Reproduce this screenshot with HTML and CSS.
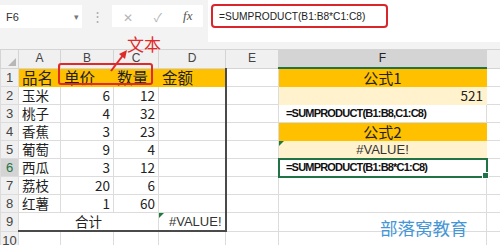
FILE: index.html
```html
<!DOCTYPE html>
<html lang="zh-CN">
<head>
    <meta charset="UTF-8">
    <meta name="viewport" content="width=device-width, initial-scale=1.0">
    <title>SUMPRODUCT</title>
    <link rel="stylesheet" href="styles.css">
</head>
<body>
    <div class="app">
        <div class="formula-bar">
            <div class="name-box">F6<span class="caret">▾</span></div>
            <div class="grip">⋮</div>
            <div class="fx-box">
                <span class="fx-btn">✕</span>
                <span class="fx-btn">✓</span>
                <span class="fx-btn fx">fx</span>
            </div>
            <div class="formula-input">
                <span class="formula-mark">=SUMPRODUCT(B1:B8*C1:C8)</span>
            </div>
        </div>

        <table class="sheet">
            <colgroup>
                <col style="width:18px"><col style="width:42px"><col style="width:53px"><col style="width:45px">
                <col style="width:67px"><col style="width:53px"><col style="width:208px"><col style="width:14px">
            </colgroup>
            <tr class="col-head">
                <th class="corner"><span class="corner-tri"></span></th>
                <th>A</th><th>B</th><th>C</th><th>D</th><th>E</th><th class="sel">F</th><th></th>
            </tr>
            <tr>
                <th class="row-num">1</th>
                <td class="title">品名</td><td class="title">单价</td><td class="title">数量</td><td class="title edge">金额</td>
                <td></td><td class="orange center big">公式1</td><td></td>
            </tr>
            <tr>
                <th class="row-num">2</th>
                <td>玉米</td><td class="num">6</td><td class="num">12</td><td class="edge"></td>
                <td></td><td class="pale num">521</td><td></td>
            </tr>
            <tr>
                <th class="row-num">3</th>
                <td>桃子</td><td class="num">4</td><td class="num">32</td><td class="edge"></td>
                <td></td><td class="code">=SUMPRODUCT(B1:B8,C1:C8)</td><td></td>
            </tr>
            <tr>
                <th class="row-num">4</th>
                <td>香蕉</td><td class="num">3</td><td class="num">23</td><td class="edge"></td>
                <td></td><td class="orange center big">公式2</td><td></td>
            </tr>
            <tr>
                <th class="row-num">5</th>
                <td>葡萄</td><td class="num">9</td><td class="num">4</td><td class="edge"></td>
                <td></td><td class="pale center err"><span class="flag"></span>#VALUE!</td><td></td>
            </tr>
            <tr>
                <th class="row-num sel">6</th>
                <td>西瓜</td><td class="num">3</td><td class="num">12</td><td class="edge"></td>
                <td></td><td class="code active">=SUMPRODUCT(B1:B8*C1:C8)<span class="handle"></span></td><td></td>
            </tr>
            <tr>
                <th class="row-num">7</th>
                <td>荔枝</td><td class="num">20</td><td class="num">6</td><td class="edge"></td>
                <td></td><td></td><td></td>
            </tr>
            <tr>
                <th class="row-num">8</th>
                <td>红薯</td><td class="num">1</td><td class="num">60</td><td class="edge"></td>
                <td></td><td></td><td></td>
            </tr>
            <tr>
                <th class="row-num">9</th>
                <td colspan="3" class="center bottom">合计</td><td class="num edge bottom err"><span class="flag"></span>#VALUE!</td>
                <td></td><td></td><td></td>
            </tr>
            <tr>
                <th class="row-num">10</th>
                <td></td><td></td><td></td><td></td><td></td><td></td><td></td>
            </tr>
        </table>

        <!-- 标注 -->
        <div class="mark-box"></div>
        <svg class="mark-arrow" width="30" height="30" viewBox="0 0 30 30">
            <path d="M3 24 L16 7" stroke="#e02a2a" stroke-width="2" fill="none"/>
            <path d="M19 3 L11 7 L17 12 Z" fill="#e02a2a"/>
        </svg>
        <div class="mark-text">文本</div>
        <div class="watermark">部落窝教育</div>
    </div>
</body>
</html>
```

FILE: styles.css
```css
body {
    margin: 0;
    background-color: #f3f3f3;
    font-family: "Noto Sans CJK SC", "Liberation Sans", sans-serif;
    color: #222;
}
.app {
    position: relative;
    width: 500px;
    height: 245px;
    overflow: hidden;
}
.formula-bar {
    display: flex;
    align-items: flex-start;
    height: 49px;
}
.name-box {
    display: flex;
    align-items: center;
    justify-content: space-between;
    box-sizing: border-box;
    width: 82px;
    height: 23px;
    margin-top: 5px;
    padding: 0 3px 0 6px;
    background-color: #fff;
    font-family: "Liberation Sans", sans-serif;
    font-size: 11px;
    color: #333;
}
.caret {
    font-size: 9px;
    color: #777;
}
.grip {
    width: 30px;
    margin-top: 6px;
    text-align: center;
    color: #aaa;
    font-size: 13px;
}
.fx-box {
    display: flex;
    align-items: center;
    justify-content: space-around;
    width: 91px;
    height: 22px;
    margin-top: 5px;
    background-color: #fff;
    color: #b5b5b5;
    font-size: 12px;
}
.fx-box .fx {
    font-family: "Liberation Serif", serif;
    font-style: italic;
    color: #555;
    font-size: 13px;
}
.formula-input {
    flex: 1;
    height: 42px;
    margin-left: 5px;
    background-color: #fff;
    padding: 4px 0 0 3px;
    box-sizing: border-box;
}
.formula-mark {
    display: block;
    box-sizing: border-box;
    width: 177px;
    height: 24px;
    padding: 5px 0 0 6px;
    border: 2px solid #d9262b;
    border-radius: 4px;
    font-family: "Liberation Sans", sans-serif;
    font-size: 10.2px;
    color: #222;
}
.sheet {
    table-layout: fixed;
    border-collapse: collapse;
    width: 500px;
    background-color: #fff;
}
.sheet th, .sheet td {
    height: 17px;
    padding: 0 3px;
    border: 1px solid #dcdcdc;
    white-space: nowrap;
    overflow: visible;
    font-size: 13.5px;
    line-height: 17px;
    font-weight: normal;
}
.col-head th {
    background-color: #f0f0f0;
    border-color: #d4d4d4;
    color: #444;
    font-family: "Liberation Sans", sans-serif;
    font-size: 12px;
    text-align: center;
}
.col-head th.sel {
    background-color: #d4d4d4;
    border-bottom: 2px solid #217346;
    color: #222;
}
.corner {
    position: relative;
}
.corner-tri {
    position: absolute;
    right: 2px;
    bottom: 2px;
    width: 0;
    height: 0;
    border-left: 8px solid transparent;
    border-bottom: 8px solid #b7b7b7;
}
.row-num {
    background-color: #f0f0f0;
    border-color: #d4d4d4;
    color: #444;
    font-family: "Liberation Sans", sans-serif;
    font-size: 13px !important;
    text-align: center;
    padding: 0 !important;
}
.row-num.sel {
    background-color: #d4d4d4;
    color: #217346;
}
.title {
    background-color: #ffc000;
    border-color: #ffc000 !important;
    font-size: 15.5px !important;
}
.num {
    text-align: right;
}
.center {
    text-align: center;
}
.big {
    font-size: 15px !important;
}
.orange {
    background-color: #ffc000;
    border-color: #ffc000 !important;
}
.pale {
    background-color: #fff2cc;
    border-color: #fff2cc !important;
}
.err {
    position: relative;
    font-family: "Liberation Sans", sans-serif;
    font-size: 13px !important;
    color: #333;
}
.flag {
    position: absolute;
    left: 0;
    top: 0;
    width: 0;
    height: 0;
    border-top: 5px solid #1e7a3c;
    border-right: 5px solid transparent;
}
.code {
    font-family: "Liberation Sans", sans-serif;
    font-weight: bold !important;
    font-size: 11px !important;
    letter-spacing: -0.8px;
    color: #111;
    padding-left: 7px !important;
}
.active {
    position: relative;
    outline: 2px solid #217346;
    outline-offset: -1px;
}
.handle {
    position: absolute;
    right: -3px;
    bottom: -3px;
    width: 5px;
    height: 5px;
    background-color: #217346;
    border: 1px solid #fff;
}
.edge {
    border-right: 2px solid #4a4a4a !important;
}
.bottom {
    border-bottom: 2px solid #4a4a4a !important;
}
.mark-box {
    position: absolute;
    left: 58px;
    top: 63px;
    width: 95px;
    height: 22px;
    box-sizing: border-box;
    border: 2px solid #e02a2a;
    border-radius: 3px;
}
.mark-arrow {
    position: absolute;
    left: 108px;
    top: 47px;
}
.mark-text {
    position: absolute;
    left: 127px;
    top: 33px;
    color: #e02a2a;
    font-size: 17px;
    line-height: 22px;
}
.watermark {
    position: absolute;
    left: 380px;
    top: 216px;
    color: #4596d6;
    font-size: 17.5px;
    line-height: 24px;
}
```
